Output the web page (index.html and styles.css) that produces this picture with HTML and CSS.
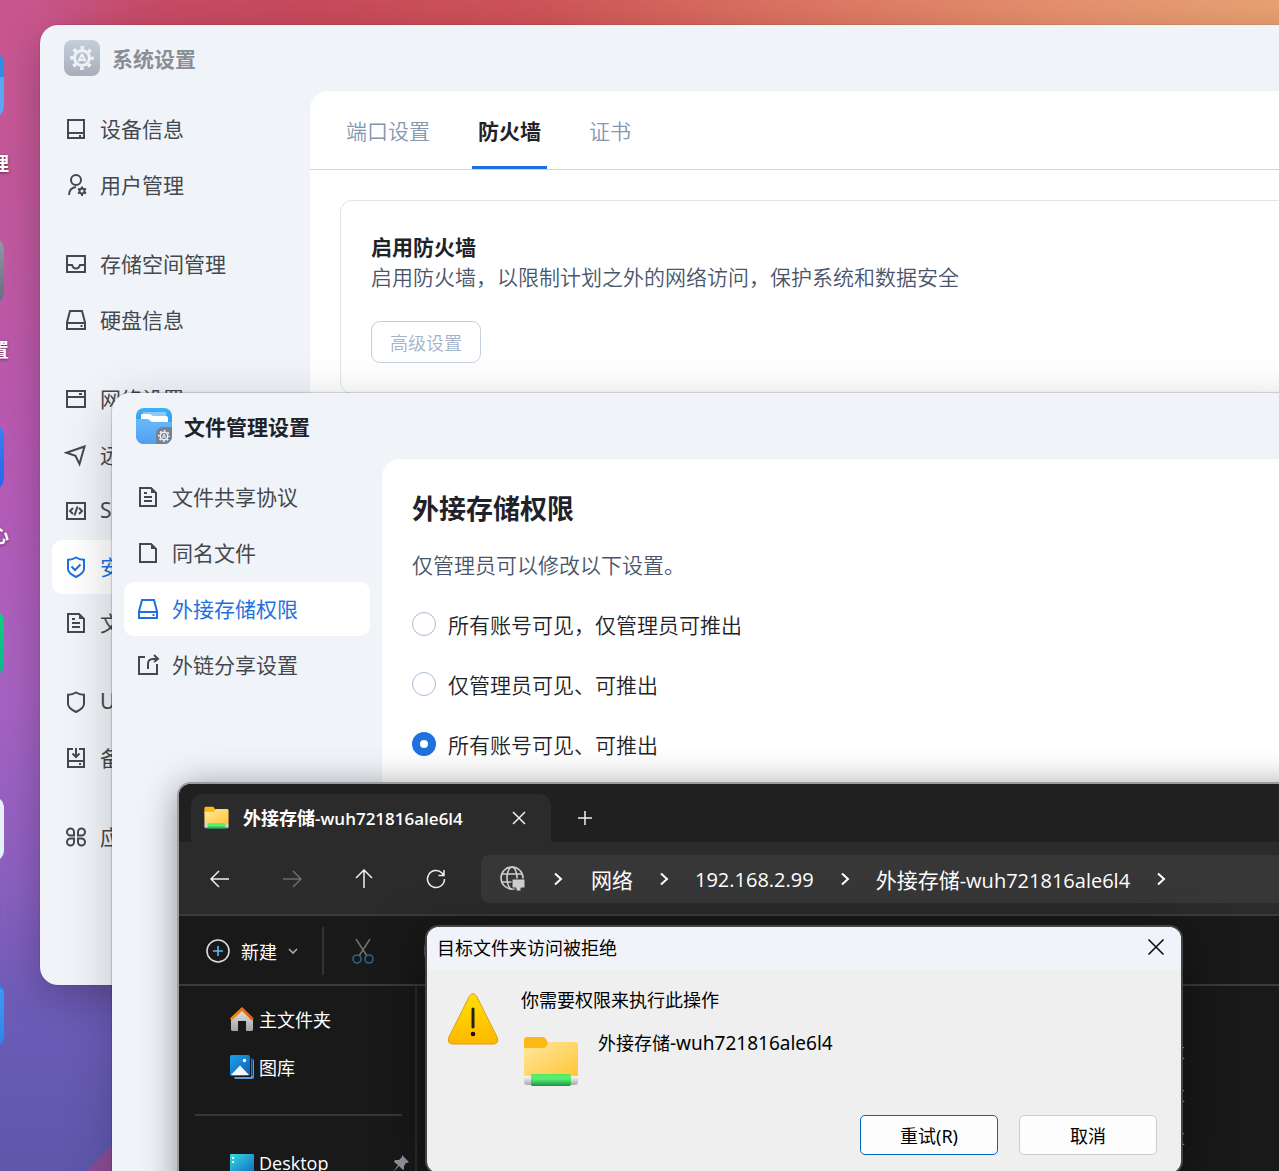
FILE: index.html
```html
<!DOCTYPE html>
<html lang="zh-CN">

<head>
    <meta charset="UTF-8">
    <meta name="viewport" content="width=device-width, initial-scale=1.0">
    <title>文件管理设置</title>
    <link rel="stylesheet" href="styles.css">
</head>

<body>
    <!-- shared icons -->
    <svg class="defs" width="0" height="0" aria-hidden="true">
        <defs>
            <linearGradient id="folderFill" x1="0" y1="0" x2="1" y2="1">
                <stop offset="0" stop-color="#ffe8a0" />
                <stop offset="1" stop-color="#ffc636" />
            </linearGradient>
            <linearGradient id="pipeFill" x1="0" y1="0" x2="0" y2="1">
                <stop offset="0" stop-color="#fafafa" />
                <stop offset="1" stop-color="#a9a9a9" />
            </linearGradient>
            <linearGradient id="greenFill" x1="0" y1="0" x2="0" y2="1">
                <stop offset="0" stop-color="#55e868" />
                <stop offset="0.4" stop-color="#5cf070" />
                <stop offset="1" stop-color="#1d8f4b" />
            </linearGradient>
            <linearGradient id="grayFill" x1="0" y1="0" x2="0" y2="1">
                <stop offset="0" stop-color="#c3cedb" />
                <stop offset="1" stop-color="#a8aeb9" />
            </linearGradient>
            <linearGradient id="blueFill" x1="0" y1="0" x2="0" y2="1">
                <stop offset="0" stop-color="#3eb0fa" />
                <stop offset="1" stop-color="#2c80da" />
            </linearGradient>
            <linearGradient id="paneFill" x1="0" y1="0" x2="0" y2="1">
                <stop offset="0" stop-color="#68b9fb" />
                <stop offset="1" stop-color="#4f9ff3" />
            </linearGradient>
            <linearGradient id="warnFill" x1="0" y1="0" x2="0" y2="1">
                <stop offset="0" stop-color="#ffe100" />
                <stop offset="1" stop-color="#ffb700" />
            </linearGradient>
            <linearGradient id="deskFill" x1="0" y1="0" x2="1" y2="1">
                <stop offset="0" stop-color="#36dbe0" />
                <stop offset="1" stop-color="#0f68c4" />
            </linearGradient>
            <linearGradient id="galleryFill" x1="0" y1="0" x2="1" y2="1">
                <stop offset="0" stop-color="#1fa0ea" />
                <stop offset="1" stop-color="#0a60b8" />
            </linearGradient>
            <linearGradient id="houseFill" x1="0" y1="0" x2="0" y2="1">
                <stop offset="0" stop-color="#e4e4e4" />
                <stop offset="1" stop-color="#a5a5a5" />
            </linearGradient>
            <linearGradient id="roofFill" x1="0" y1="0" x2="1" y2="0">
                <stop offset="0" stop-color="#f7941d" />
                <stop offset="1" stop-color="#e0540e" />
            </linearGradient>
        </defs>
        <symbol id="i-drive" viewBox="0 0 24 24">
            <path d="M6 3h12l3 11.500V21H3v-6.500z" />
            <path d="M3 15h18" />
            <path d="M16.500 17h2v2h-2z" class="solid" />
        </symbol>
        <symbol id="i-doc" viewBox="0 0 24 24">
            <path d="M4 3h11l5 5v13H4z" />
            <path d="M15 3v5h5z" class="solid" />
            <path d="M8 12h8M8 16h8" />
            <path d="M8 7h3v2H8z" class="solid" />
        </symbol>
        <symbol id="i-network-folder" viewBox="0 0 56 52">
            <path d="M1 4a3 3 0 0 1 3-3h15q3 0 4.500 3l2 4v8H1z" fill="#fcb815" />
            <path d="M1 12h20q2 0 3-3t3-3h25q3 0 3 3v31H1z" fill="url(#folderFill)" />
            <path d="M1 40h54v6q0 3-3 3H4q-3 0-3-3z" fill="url(#pipeFill)" />
            <path d="M9 38h37q2 0 2 2v8q0 2-2 2H9q-1 0-1-2v-8q0-2 1-2z" fill="url(#greenFill)" />
        </symbol>
        <symbol id="i-gear" viewBox="0 0 24 24">
            <circle cx="12" cy="12" r="7.500" fill="none" stroke="currentColor" stroke-width="3" />
            <circle cx="12" cy="12" r="10.300" fill="none" stroke="currentColor" stroke-width="3.200" stroke-dasharray="3.600 4.490" stroke-dashoffset="1.800" />
            <path d="M12 8l-3.500 7.500M12 8l3.500 7.500M9.500 14h5" fill="none" stroke="currentColor" stroke-width="2" />
        </symbol>
        <symbol id="i-chevron" viewBox="0 0 12 16">
            <path d="M3 2.500L9 8l-6 5.500" />
        </symbol>
    </svg>

    <div class="desktop">
        <div class="shortcuts">
            <div class="shortcut"><span class="tile tile-files"></span><span class="shortcut-name">文件管理</span></div>
            <div class="shortcut"><span class="tile tile-settings"></span><span class="shortcut-name">系统设置</span></div>
            <div class="shortcut"><span class="tile tile-store"></span><span class="shortcut-name">应用中心</span></div>
            <div class="shortcut"><span class="tile tile-green"></span></div>
            <div class="shortcut"><span class="tile tile-white"></span><span class="shortcut-name">回收站</span></div>
            <div class="shortcut"><span class="tile tile-blue"></span></div>
        </div>

        <!-- system settings -->
        <section class="window window-system">
            <header class="window-header inactive">
                <svg class="app-icon" viewBox="0 0 36 36">
                    <rect width="36" height="36" rx="8" fill="url(#grayFill)" />
                    <use href="#i-gear" x="6" y="6" width="24" height="24" />
                </svg>
                <h1 class="window-title">系统设置</h1>
            </header>
            <div class="window-body">
                <nav class="sidebar">
                    <div class="nav-group">
                        <a href="#" class="nav-item">
                            <svg class="icon" viewBox="0 0 24 24"><path d="M4 3h16v18H4zM4 16h16" /><path d="M15 18h2v2h-2z" class="solid" /></svg>
                            设备信息
                        </a>
                        <a href="#" class="nav-item">
                            <svg class="icon" viewBox="0 0 24 24"><circle cx="12" cy="7" r="5" /><path d="M5 22q0-7 7-8" /><circle cx="18" cy="18" r="2.500" /><path d="M18 13.500v2M18 20.500v2.500M14 15.500l2 1.300M20 19.200l2 1.300M14 20.500l2-1.300M20 16.800l2-1.300" /></svg>
                            用户管理
                        </a>
                    </div>
                    <div class="nav-group">
                        <a href="#" class="nav-item">
                            <svg class="icon" viewBox="0 0 24 24"><path d="M3 4h18v16H3zM3 13h5q1 3.500 4 3.500t4-3.500h5" /></svg>
                            存储空间管理
                        </a>
                        <a href="#" class="nav-item">
                            <svg class="icon"><use href="#i-drive" /></svg>
                            硬盘信息
                        </a>
                    </div>
                    <div class="nav-group">
                        <a href="#" class="nav-item">
                            <svg class="icon" viewBox="0 0 24 24"><path d="M3 4h18v16H3zM3 10h18" /><path d="M15 6h3v2h-3z" class="solid" /></svg>
                            网络设置
                        </a>
                        <a href="#" class="nav-item">
                            <svg class="icon" viewBox="0 0 24 24"><path d="M20.500 3.500L2.500 9.800l9 3L15.500 21z" /></svg>
                            远程
                        </a>
                        <a href="#" class="nav-item">
                            <svg class="icon" viewBox="0 0 24 24"><path d="M3 4h18v16H3z" /><path d="M9 9l-3 3 3 3M15 9l3 3-3 3M13.500 7.500l-3 9" /></svg>
                            SSH
                        </a>
                        <a href="#" class="nav-item active">
                            <svg class="icon" viewBox="0 0 24 24"><path d="M12 2.500Q16 5 20 4.800V14q0 4-8 8-8-4-8-8V4.800Q8 5 12 2.500z" /><path d="M7.500 11.500l3.500 3.500 5.500-5.500" /></svg>
                            安全性
                        </a>
                        <a href="#" class="nav-item">
                            <svg class="icon"><use href="#i-doc" /></svg>
                            文件
                        </a>
                    </div>
                    <div class="nav-group">
                        <a href="#" class="nav-item">
                            <svg class="icon" viewBox="0 0 24 24"><path d="M12 2.500Q16 5 20 4.800V14q0 4-8 8-8-4-8-8V4.800Q8 5 12 2.500z" /></svg>
                            UPS
                        </a>
                        <a href="#" class="nav-item">
                            <svg class="icon" viewBox="0 0 24 24"><path d="M9 3H4v18h16V3h-5M4 15h16M12 2v8M8.500 7.500L12 11l3.500-3.500" /><path d="M15 17h2v2h-2z" class="solid" /></svg>
                            备份
                        </a>
                    </div>
                    <div class="nav-group">
                        <a href="#" class="nav-item">
                            <svg class="icon" viewBox="0 0 24 24"><path d="M10 10V7a3.500 3.500 0 1 0-3.500 3.500H10zM14 10V7a3.500 3.500 0 1 1 3.500 3.500H14zM10 14v3a3.500 3.500 0 1 1-3.500-3.500H10zM14 14v3a3.500 3.500 0 1 0 3.500-3.500H14z" /></svg>
                            应用
                        </a>
                    </div>
                </nav>
                <main class="panel">
                    <div class="tabs">
                        <button type="button" class="tab">端口设置</button>
                        <button type="button" class="tab active">防火墙</button>
                        <button type="button" class="tab">证书</button>
                    </div>
                    <div class="card">
                        <h2 class="card-title">启用防火墙</h2>
                        <p class="card-text">启用防火墙，以限制计划之外的网络访问，保护系统和数据安全</p>
                        <button type="button" class="outline-btn">高级设置</button>
                    </div>
                </main>
            </div>
        </section>

        <!-- file manager settings -->
        <section class="window window-files">
            <header class="window-header">
                <svg class="app-icon" viewBox="0 0 36 36">
                    <clipPath id="appClip"><rect width="36" height="36" rx="8" /></clipPath>
                    <g clip-path="url(#appClip)">
                        <rect width="36" height="36" fill="url(#blueFill)" />
                        <path d="M7 4h23v12H7z" fill="#8cc9f8" />
                        <path d="M5 7q0-1 1-1h8l3 2h13q2 0 2 2v8H5z" fill="#fff" />
                        <path d="M0 11h11q2 0 3 1.500t4 1.500h18v22H0z" fill="url(#paneFill)" />
                        <path d="M20 36v-9q0-8 8-8h8v17z" fill="#76818f" />
                    </g>
                    <use href="#i-gear" x="22" y="22" width="12" height="12" />
                </svg>
                <h1 class="window-title">文件管理设置</h1>
            </header>
            <div class="window-body">
                <nav class="sidebar">
                    <div class="nav-group">
                        <a href="#" class="nav-item">
                            <svg class="icon"><use href="#i-doc" /></svg>
                            文件共享协议
                        </a>
                        <a href="#" class="nav-item">
                            <svg class="icon" viewBox="0 0 24 24"><path d="M4 3h11l5 5v13H4z" /><path d="M15 3v5h5z" class="solid" /></svg>
                            同名文件
                        </a>
                        <a href="#" class="nav-item active">
                            <svg class="icon"><use href="#i-drive" /></svg>
                            外接存储权限
                        </a>
                        <a href="#" class="nav-item">
                            <svg class="icon" viewBox="0 0 24 24"><path d="M9 4H3v17h18V11M12 16v-5q0-5 5-5h5M18 2l4 4-4 3" /></svg>
                            外链分享设置
                        </a>
                    </div>
                </nav>
                <main class="panel permission">
                    <h2 class="permission-title">外接存储权限</h2>
                    <p class="permission-text">仅管理员可以修改以下设置。</p>
                    <div class="options">
                        <label class="option"><input type="radio" name="access">所有账号可见，仅管理员可推出</label>
                        <label class="option"><input type="radio" name="access">仅管理员可见、可推出</label>
                        <label class="option"><input type="radio" name="access" checked>所有账号可见、可推出</label>
                    </div>
                </main>
            </div>
        </section>

        <!-- explorer -->
        <section class="explorer">
            <div class="explorer-tabs">
                <div class="explorer-tab">
                    <svg class="tab-icon"><use href="#i-network-folder" /></svg>
                    <span class="tab-name">外接存储<span class="latin">-wuh721816ale6l4</span></span>
                    <button type="button" class="plain-btn" aria-label="关闭标签页">
                        <svg width="14" height="14" viewBox="0 0 14 14"><path d="M1 1l12 12M13 1L1 13" /></svg>
                    </button>
                </div>
                <button type="button" class="plain-btn" aria-label="新标签页">
                    <svg width="16" height="16" viewBox="0 0 16 16"><path d="M8 1v14M1 8h14" /></svg>
                </button>
            </div>
            <div class="explorer-nav">
                <button type="button" class="plain-btn" aria-label="后退">
                    <svg width="20" height="20" viewBox="0 0 20 20"><path d="M19 10H1M9 2l-8 8 8 8" /></svg>
                </button>
                <button type="button" class="plain-btn dim" aria-label="前进">
                    <svg width="20" height="20" viewBox="0 0 20 20"><path d="M1 10h18M11 2l8 8-8 8" /></svg>
                </button>
                <button type="button" class="plain-btn" aria-label="向上">
                    <svg width="20" height="20" viewBox="0 0 20 20"><path d="M10 19V1M2 9l8-8 8 8" /></svg>
                </button>
                <button type="button" class="plain-btn" aria-label="刷新">
                    <svg width="20" height="20" viewBox="0 0 20 20"><path d="M18.500 10A8.500 8.500 0 1 1 16 4l1.500 2M18 1v5.500h-5.500" /></svg>
                </button>
                <div class="address">
                    <svg class="globe" width="26" height="26" viewBox="0 0 26 26">
                        <circle cx="12" cy="12" r="11" />
                        <ellipse cx="12" cy="12" rx="5" ry="11" />
                        <path d="M2 8h20M2 16h20" />
                        <path d="M12 13h13v9h-4v3h-5v-3h-4z" class="screen" />
                    </svg>
                    <svg class="chevron"><use href="#i-chevron" /></svg>
                    <a href="#" class="crumb">网络</a>
                    <svg class="chevron"><use href="#i-chevron" /></svg>
                    <a href="#" class="crumb"><span class="latin">192.168.2.99</span></a>
                    <svg class="chevron"><use href="#i-chevron" /></svg>
                    <a href="#" class="crumb">外接存储<span class="latin">-wuh721816ale6l4</span></a>
                    <svg class="chevron"><use href="#i-chevron" /></svg>
                </div>
            </div>
            <div class="explorer-tools">
                <button type="button" class="new-btn">
                    <svg width="24" height="24" viewBox="0 0 24 24"><circle cx="12" cy="12" r="11" stroke="#dadada" /><path d="M12 7v10M7 12h10" stroke="#58bdf2" /></svg>
                    新建
                    <svg width="10" height="10" viewBox="0 0 10 10"><path d="M1 3l4 4 4-4" stroke="#aaa" /></svg>
                </button>
                <button type="button" class="cut-btn" aria-label="剪切">
                    <svg width="22" height="26" viewBox="0 0 22 26"><path d="M4 1l11 17M18 1L7 18" stroke="#6e6e6e" /><circle cx="5" cy="21" r="4" stroke="#2e6584" /><circle cx="17" cy="21" r="4" stroke="#2e6584" /></svg>
                </button>
                <button type="button" class="copy-btn" aria-label="复制">
                    <svg width="20" height="24" viewBox="0 0 20 24"><rect x="1" y="4" width="14" height="16" rx="4" stroke="#5e5e5e" /></svg>
                </button>
            </div>
            <div class="explorer-body">
                <nav class="places">
                    <a href="#" class="place">
                        <svg width="24" height="24" viewBox="0 0 24 24"><path d="M1 12L12 2l11 10v10q0 2-1 2h-6V14H8v10H2q-1 0-1-2z" fill="url(#houseFill)" /><path d="M1 12.500L12 2l11 10.500" fill="none" stroke="url(#roofFill)" stroke-width="3" class="roof" /></svg>
                        主文件夹
                    </a>
                    <a href="#" class="place">
                        <svg width="24" height="24" viewBox="0 0 24 24"><path d="M4 22h17V4h1q2 0 2 2v16q0 2-2 2H6q-2 0-2-2z" fill="#5c9bd8" /><path d="M21.500 3h1.500v18h-1.500z" fill="#0b4f95" /><rect width="20" height="21" rx="2" fill="url(#galleryFill)" /><path d="M1 20l9-9.500 9 9.500z" fill="#f2f8ff" /><circle cx="14.500" cy="5.500" r="1.700" fill="#fff" /></svg>
                        图库
                    </a>
                    <hr class="places-line">
                    <a href="#" class="place">
                        <svg width="24" height="24" viewBox="0 0 24 24"><rect y="3" width="24" height="20" rx="1" fill="url(#deskFill)" /><path d="M2 6h2v2H2zM2 10h2v2H2z" fill="#fff" /></svg>
                        Desktop
                        <svg class="pin" width="18" height="18" viewBox="0 0 18 18"><path d="M10 1l7 7-2 1-1 0-2 3 0 3-1 1-4-4-6 6 5-7-4-3 1-2h4l3-3z" fill="#8f959c" /></svg>
                    </a>
                </nav>
                <ul class="file-list">
                    <li>共享</li>
                    <li>共享</li>
                    <li>共享</li>
                </ul>
            </div>
        </section>

        <!-- access denied dialog -->
        <div class="dialog" role="dialog" aria-labelledby="dialog-title">
            <div class="dialog-header">
                <span id="dialog-title">目标文件夹访问被拒绝</span>
                <button type="button" class="close-btn" aria-label="关闭">
                    <svg width="18" height="18" viewBox="0 0 18 18"><path d="M1.500 1.500l15 15M16.500 1.500l-15 15" /></svg>
                </button>
            </div>
            <div class="dialog-body">
                <svg class="warning" width="52" height="52" viewBox="0 0 52 52">
                    <path d="M22.500 3q3.500-4.500 7 0L50 44q2.500 7-4 7H6q-6.500 0-4-7z" fill="url(#warnFill)" stroke="#e09a10" />
                    <path d="M26 16v18" stroke="#222" stroke-width="3" stroke-linecap="round" />
                    <circle cx="26" cy="41" r="2.300" fill="#111" />
                </svg>
                <div class="dialog-content">
                    <p class="dialog-text">你需要权限来执行此操作</p>
                    <div class="target">
                        <svg width="56" height="52"><use href="#i-network-folder" /></svg>
                        <span>外接存储<span class="latin">-wuh721816ale6l4</span></span>
                    </div>
                </div>
            </div>
            <div class="dialog-actions">
                <button type="button" class="dialog-btn default">重试(R)</button>
                <button type="button" class="dialog-btn">取消</button>
            </div>
        </div>
    </div>
</body>

</html>
```

FILE: styles.css
```css
* {
    box-sizing: border-box;
}

body {
    margin: 0;
    font-family: "Noto Sans", "Noto Sans CJK SC", sans-serif;
    font-size: 21px;
}

h1,
h2,
p,
ul {
    margin: 0;
    padding: 0;
}

a {
    color: inherit;
    text-decoration: none;
}

button {
    font-family: inherit;
    cursor: pointer;
}

svg {
    flex: none;
}

.defs {
    position: absolute;
}

.desktop {
    position: relative;
    height: 100vh;
    overflow: hidden;
    background:
        linear-gradient(to right, rgba(198, 80, 110, 0) 3%, #c74c68 11%, #c84a5c 24%, #cf5458 42%, #dc7462 62%, #e6916e 83%, #e8a272 100%) top / 100% 30px no-repeat,
        linear-gradient(135deg, transparent 50%, #8b4d92 50%) 82px 100% / 60px 50px no-repeat,
        linear-gradient(to bottom, #c9568c 0, #c1599f 20%, #b85ab4 38%, #a862c2 59%, #8a60c0 76%, #6c5cb8 86%, #5f57ac 100%);
}

/* desktop shortcuts, half off screen */
.shortcuts {
    position: absolute;
    top: 52px;
    left: -62px;
    width: 66px;
}

.shortcut {
    display: flex;
    flex-direction: column;
    align-items: center;
    height: 186px;
}

.tile {
    width: 66px;
    height: 66px;
    border-radius: 12px;
}

.tile-files { background: linear-gradient(#2f8ee8 38%, #58a8f6 38%); }
.tile-settings { background: linear-gradient(#8f9cac, #646e7c); }
.tile-store { background: linear-gradient(#3d82f6, #2466ec); }
.tile-green { background: linear-gradient(#0fd080, #0cb98a); }
.tile-white { background: linear-gradient(#eef2fb, #dff4f6); }
.tile-blue { background: linear-gradient(#2a86e4 10%, #399bf5 10%, #2e84e8); }

.shortcut-name {
    margin-top: 31px;
    font-size: 19px;
    font-weight: 700;
    line-height: 30px;
    white-space: nowrap;
    color: #fff;
    text-shadow: 0 1px 3px rgba(0, 0, 0, 0.5);
}

/* settings windows */
.window {
    position: absolute;
    display: flex;
    flex-direction: column;
    border-radius: 18px;
    background: #f0f4f9;
    color: #45494f;
}

.window-system {
    top: 25px;
    left: 40px;
    right: -40px;
    height: 960px;
    box-shadow: 0 12px 40px rgba(0, 0, 0, 0.25), 0 0 1px rgba(0, 0, 0, 0.5);
}

.window-files {
    top: 393px;
    left: 112px;
    right: -40px;
    height: 960px;
    box-shadow: 0 0 1px 1px rgba(0, 0, 0, 0.16), 0 12px 50px rgba(0, 0, 0, 0.2);
}

.window-header {
    display: flex;
    align-items: center;
    gap: 12px;
    height: 66px;
    padding-left: 24px;
}

.window-title {
    font-size: 21px;
    font-weight: 700;
    color: #1f2329;
}

.inactive .window-title {
    color: #8a8e94;
}

.app-icon {
    width: 36px;
    height: 36px;
    color: #eef2f8;
}

.window-body {
    flex: 1;
    display: flex;
}

.sidebar {
    width: 270px;
    padding: 11px 12px;
    display: flex;
    flex-direction: column;
    gap: 25px;
}

.nav-group {
    display: flex;
    flex-direction: column;
    gap: 2px;
}

.nav-item {
    display: flex;
    align-items: center;
    gap: 12px;
    height: 54px;
    padding: 0 12px 3px;
    border-radius: 10px;
}

.nav-item.active {
    background: #fff;
    color: #1f71e0;
}

.icon {
    width: 24px;
    height: 24px;
    margin-top: 3px;
    fill: none;
    stroke: currentColor;
    stroke-width: 2;
}

.solid {
    fill: currentColor;
    stroke: none;
}

.panel {
    flex: 1;
    border-top-left-radius: 18px;
    background: #fff;
}

.tabs {
    display: flex;
    gap: 36px;
    padding: 0 30px;
    border-bottom: 1px solid #c9d5e0;
}

.tab {
    padding: 24px 6px 19px;
    border: none;
    border-bottom: 3px solid transparent;
    background: none;
    font-size: 21px;
    font-weight: 350;
    line-height: 32px;
    color: #8496b0;
}

.tab.active {
    border-bottom-color: #1f71e0;
    font-weight: 700;
    color: #1f2329;
}

.card {
    margin: 30px;
    padding: 30px;
    border: 1px solid #dde5ed;
    border-radius: 12px;
}

.card-title {
    font-size: 21px;
    line-height: 32px;
    color: #1f2329;
}

.card-text {
    font-weight: 350;
    line-height: 28px;
    color: #4a556b;
}

.outline-btn {
    height: 42px;
    margin-top: 30px;
    padding: 0 18px;
    border: 1px solid #c5d0de;
    border-radius: 9px;
    background: #fff;
    font-size: 18px;
    font-weight: 350;
    color: #a3b4ca;
}

.permission {
    padding: 32px 30px;
}

.permission-title {
    font-size: 27px;
    line-height: 36px;
    color: #1f2329;
}

.permission-text {
    margin-top: 23px;
    font-weight: 350;
    line-height: 30px;
    color: #4a556b;
}

.options {
    display: flex;
    flex-direction: column;
    gap: 30px;
    margin-top: 30px;
}

.option {
    display: flex;
    align-items: center;
    gap: 12px;
    font-weight: 350;
    line-height: 30px;
    color: #1f2329;
}

.option input {
    appearance: none;
    width: 24px;
    height: 24px;
    margin: 0 0 2px;
    border: 1px solid #a9bad2;
    border-radius: 50%;
    background: #fff;
}

.option input:checked {
    border: 8px solid #1f71e0;
}

/* explorer */
.explorer {
    position: absolute;
    top: 784px;
    left: 179px;
    right: -40px;
    bottom: -40px;
    display: flex;
    flex-direction: column;
    border-radius: 12px;
    background: #191919;
    box-shadow: 0 0 0 2px #9a9c9f, 0 4px 36px rgba(0, 0, 0, 0.45);
    font-family: "Open Sans", "Noto Sans CJK SC", sans-serif;
    font-size: 18px;
    color: #fff;
    overflow: clip;
}

.explorer svg {
    fill: none;
    stroke: currentColor;
}

.plain-btn {
    display: flex;
    align-items: center;
    justify-content: center;
    width: 32px;
    height: 32px;
    padding: 0;
    border: none;
    background: none;
    color: #f0f0f0;
}

.plain-btn.dim {
    color: #6c6c6c;
}

.plain-btn svg {
    stroke-width: 1.5;
}

.explorer-tabs {
    display: flex;
    align-items: center;
    gap: 18px;
    height: 58px;
    padding: 10px 12px 0;
    background: #202020;
}

.explorer-tab {
    display: flex;
    align-items: center;
    width: 360px;
    height: 48px;
    padding: 0 16px 0 13px;
    border-radius: 12px 12px 0 0;
    background: #2b2b2b;
}

.explorer .tab-icon {
    width: 25px;
    height: 24px;
    margin-right: 14px;
    stroke: none;
}

.tab-name {
    flex: 1;
    padding-bottom: 2px;
    font-weight: 600;
}

.tab-name .latin {
    font-size: 17px;
}

.explorer-nav {
    display: flex;
    align-items: center;
    gap: 40px;
    height: 74px;
    padding: 2px 0 0 25px;
    border-bottom: 2px solid #3b3b3b;
    background: #2b2b2b;
}

.address {
    flex: 1;
    display: flex;
    align-items: center;
    height: 48px;
    margin-left: -11px;
    padding-left: 19px;
    border-radius: 8px;
    background: #373737;
}

.explorer .globe {
    stroke: #cfcfcf;
    stroke-width: 1.6;
}

.explorer .globe .screen {
    fill: #cfcfcf;
    stroke: #373737;
    stroke-width: 1;
}

.chevron {
    width: 12px;
    height: 16px;
    margin: 0 25px;
    stroke-width: 2;
}

.globe + .chevron {
    margin: 0 27px 0 26px;
}

.crumb {
    font-size: 21px;
    white-space: nowrap;
}

.crumb .latin {
    font-size: 20px;
}

.explorer-tools {
    display: flex;
    align-items: center;
    height: 70px;
    padding: 2px 0 0 27px;
    border-bottom: 2px solid #3b3b3b;
}

.explorer-tools svg {
    stroke-width: 1.6;
}

.new-btn {
    display: flex;
    align-items: center;
    gap: 11px;
    height: 48px;
    padding: 0 24px 0 0;
    border: none;
    border-right: 2px solid #333;
    background: none;
    font-size: 18px;
    color: #fff;
}

.cut-btn {
    display: flex;
    align-items: center;
    padding: 0 28px;
    border: none;
    background: none;
}

.copy-btn {
    display: flex;
    padding: 0 22px;
    border: none;
    background: none;
}

.explorer-body {
    flex: 1;
    display: flex;
}

.places {
    width: 238px;
    padding: 9px 13px 0 16px;
    border-right: 2px solid #2c2c2c;
}

.place {
    display: flex;
    align-items: center;
    gap: 5px;
    height: 48px;
    padding-left: 35px;
}

.explorer .place svg {
    stroke: none;
}

.place .pin {
    margin-left: auto;
    margin-right: -8px;
}

.places-line {
    height: 2px;
    margin: 23px 0;
    border: none;
    background: #383838;
}

.file-list {
    padding: 47px 0 0 732px;
    list-style: none;
    line-height: 43px;
    color: #b8b8b8;
}

/* dialog */
.dialog {
    position: absolute;
    top: 927px;
    left: 427px;
    width: 754px;
    border-radius: 12px;
    background: #efefef;
    box-shadow: 0 0 0 2px #444, 0 12px 50px rgba(0, 0, 0, 0.5);
    font-size: 18px;
    color: #000;
    overflow: clip;
}

.dialog-header {
    display: flex;
    align-items: center;
    justify-content: space-between;
    height: 43px;
    padding: 0 16px 3px 10px;
    background: #f0f3fa;
}

.close-btn {
    display: flex;
    padding: 0;
    border: none;
    background: none;
    color: #111;
}

.close-btn svg {
    fill: none;
    stroke: currentColor;
    stroke-width: 1.6;
}

.dialog-body {
    display: flex;
    gap: 22px;
    padding: 18px 20px 0;
}

.warning {
    margin-top: 5px;
    fill: none;
}

.dialog-text {
    line-height: 24px;
}

.target {
    display: flex;
    gap: 19px;
    padding-left: 2px;
    margin-top: 24px;
}

.target span {
    line-height: 14px;
}

.target .latin {
    font-size: 19px;
}

.dialog-actions {
    display: flex;
    justify-content: flex-end;
    gap: 21px;
    padding: 27px 24px 18px;
}

.dialog-btn {
    width: 138px;
    height: 40px;
    border: 1px solid #ccc;
    border-radius: 5px;
    background: #fdfdfd;
    font-size: 18px;
    color: #000;
}

.dialog-btn.default {
    border-color: #0067c0;
}
```
